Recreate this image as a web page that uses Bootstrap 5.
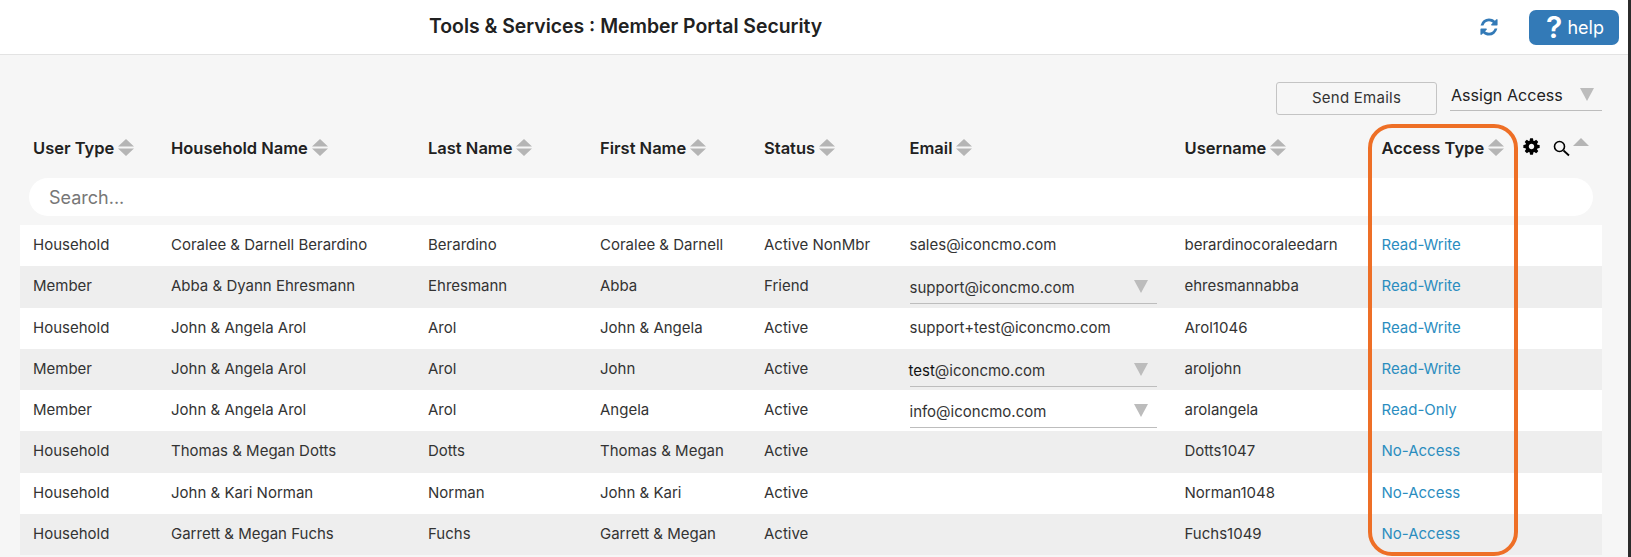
<!DOCTYPE html>
<html lang="en">
<head>
<meta charset="utf-8">
<title>Member Portal Security</title>
<link href="https://cdn.jsdelivr.net/npm/bootstrap@5.3.0/dist/css/bootstrap.min.css" rel="stylesheet">
<style>
html,body{height:557px;overflow:hidden;background:#f6f6f6;font-family:Inter,"Liberation Sans",sans-serif;color:#333}
.app-shell{height:557px}
.page-area{flex:1 1 auto;min-width:0;position:relative;background:#f6f6f6}
.edge-strip{flex:0 0 3px;background:#2b2b2b}
.top-bar{height:55px;background:#fff;border-bottom:1px solid #e3e3e3;padding-left:429px;padding-right:9px}
.page-title{font-size:19.400px;font-weight:600;color:#212121;margin:0;line-height:1}
.refresh-ico{width:20px;height:20px;fill:#337ab7;margin-right:30px}
.help-btn{width:90px;height:35px;background:#337ab7;border:0;border-radius:7px;color:#fff;font-size:18px;padding:0 0 0 2px;display:flex;align-items:center;justify-content:center;gap:5px}
.help-q{font-size:30px;font-weight:600;line-height:1}
.tool-row{height:69px;padding:27px 26px 0 0;justify-content:flex-end;gap:13px}
.send-btn{width:161px;height:33px;background:#f6f6f6;border:1px solid #c4c4c4;border-radius:3px;color:#333;font-size:15px;letter-spacing:.25px;padding:0}
.pick-box{border-bottom:1px solid #bdbdbd;display:flex;justify-content:space-between}
.assign-pick{width:152px;height:29px;font-size:16.100px;color:#212121;padding:1px 8px 0 1px;line-height:24px}
.assign-pick svg{margin-top:5px}
.mail-pick{width:247px;height:33px;color:#333;line-height:22px;padding:6px 9px 0 0;margin-top:2px}
.mail-pick svg{margin-top:3px}
.dark-text{color:#111;margin-left:-1px}
.tbl-wrap{margin-left:20px;width:1582px}
.sec-table{table-layout:fixed;width:1582px;margin:0;border-collapse:collapse;--bs-table-bg:transparent;--bs-table-border-color:transparent}
.sec-table th{background:#f6f6f6;color:#212121;font-size:16.500px;font-weight:600;height:47px;padding:1px 0 0 13px;vertical-align:middle;border:0;white-space:nowrap;box-shadow:none}
.sec-table td{height:41.25px;padding:0 0 .4px 13px;vertical-align:middle;font-size:15px;color:#333;border:0;white-space:nowrap;box-shadow:none}
.sec-table tbody tr:nth-child(odd) td{background:#fff}
.sec-table tbody tr:nth-child(even) td{background:#eee}
.sec-table td.access-cell{color:#2b8dbf}
.sec-table th.search-cell{height:54px;padding:0 9px 2px 9px}
.search-input{width:100%;height:38px;border:0;border-radius:19px;background:#fff;padding:0 20px;font-size:18px;color:#333;outline:0;box-shadow:none}
.search-input::placeholder{color:#777}
.sort-ico{width:16px;height:17px;fill:#b5b5b5;margin-left:4px;vertical-align:-2px}
.tools-cell{display:flex;align-items:flex-start}
.gear-ico{width:19px;height:19px;margin-top:1px}
.find-ico{width:17px;height:17px;margin-left:12px;margin-top:4px}
.up-ico{width:16px;height:8px;fill:#b5b5b5;margin-left:3px;margin-top:2px}
.focus-ring-box{position:absolute;left:1368px;top:124px;width:150px;height:432px;border:4px solid #ee6f26;border-radius:24px;pointer-events:none}
.tools-gap{margin-left:17.500px}
</style>
</head>
<body>
<div class="app-shell d-flex">
<div class="page-area">
  <header class="top-bar d-flex align-items-center">
    <h1 class="page-title">Tools &amp; Services : Member Portal Security</h1>
    <div class="ms-auto d-flex align-items-center">
      <svg class="refresh-ico" viewBox="0 0 1792 1792"><path d="M1639 1056q0 5-1 7-64 268-268 434.5t-478 166.5q-146 0-282.5-55t-243.5-157l-129 129q-19 19-45 19t-45-19-19-45v-448q0-26 19-45t45-19h448q26 0 45 19t19 45-19 45l-137 137q71 66 161 102t187 36q134 0 250-65t186-179q11-17 53-117 8-23 30-23h192q13 0 22.5 9.5t9.5 22.5zm25-800v448q0 26-19 45t-45 19h-448q-26 0-45-19t-19-45 19-45l138-138q-148-137-349-137-134 0-250 65t-186 179q-11 17-53 117-8 23-30 23h-199q-13 0-22.5-9.5t-9.5-22.5v-7q65-268 270-434.5t480-166.5q146 0 284 55.5t245 156.5l130-129q19-19 45-19t45 19 19 45z"/></svg>
      <button type="button" class="btn help-btn"><span class="help-q">?</span><span>help</span></button>
    </div>
  </header>
  <div class="tool-row d-flex align-items-start">
    <button type="button" class="btn send-btn">Send Emails</button>
    <div class="pick-box assign-pick"><span>Assign Access</span><svg width="14" height="13" viewBox="0 0 14 13"><path d="M0 0h14L7 13z" fill="#bcbcbc"/></svg></div>
  </div>
  <div class="tbl-wrap">
    <table class="table sec-table">
      <colgroup><col style="width:138px"><col style="width:257px"><col style="width:172px"><col style="width:164px"><col style="width:145.5px"><col style="width:275px"><col style="width:197px"><col style="width:233.5px"></colgroup>
      <thead>
        <tr>
          <th>User Type<svg class="sort-ico" viewBox="0 0 16 17"><path d="M0 7.500 8 0l8 7.500zM0 9.500h16L8 17z"/></svg></th>
          <th>Household Name<svg class="sort-ico" viewBox="0 0 16 17"><path d="M0 7.500 8 0l8 7.500zM0 9.500h16L8 17z"/></svg></th>
          <th>Last Name<svg class="sort-ico" viewBox="0 0 16 17"><path d="M0 7.500 8 0l8 7.500zM0 9.500h16L8 17z"/></svg></th>
          <th>First Name<svg class="sort-ico" viewBox="0 0 16 17"><path d="M0 7.500 8 0l8 7.500zM0 9.500h16L8 17z"/></svg></th>
          <th>Status<svg class="sort-ico" viewBox="0 0 16 17"><path d="M0 7.500 8 0l8 7.500zM0 9.500h16L8 17z"/></svg></th>
          <th>Email<svg class="sort-ico" viewBox="0 0 16 17"><path d="M0 7.500 8 0l8 7.500zM0 9.500h16L8 17z"/></svg></th>
          <th>Username<svg class="sort-ico" viewBox="0 0 16 17"><path d="M0 7.500 8 0l8 7.500zM0 9.500h16L8 17z"/></svg></th>
          <th>
            <div class="d-flex align-items-start">
              <span>Access Type<svg class="sort-ico" viewBox="0 0 16 17"><path d="M0 7.500 8 0l8 7.500zM0 9.500h16L8 17z"/></svg></span>
              <span class="tools-cell tools-gap">
                <svg class="gear-ico" viewBox="0 0 1792 1792"><path fill="#000" d="M1152 896q0-106-75-181t-181-75-181 75-75 181 75 181 181 75 181-75 75-181zm512-109v222q0 12-8 23t-20 13l-185 28q-19 54-39 91 35 50 107 138 10 12 10 25t-9 23q-27 37-99 108t-94 71q-12 0-26-9l-138-108q-44 23-91 38-16 136-29 186-7 28-36 28h-222q-14 0-24.500-8.500t-11.500-21.500l-28-184q-49-16-90-37l-141 107q-10 9-25 9-14 0-25-11-126-114-165-168-7-10-7-23 0-12 8-23 15-21 51-66.500t54-70.500q-27-50-41-99l-183-27q-13-2-21-12.500t-8-23.500v-222q0-12 8-23t19-13l186-28q14-46 39-92-40-57-107-138-10-12-10-24 0-10 9-23 26-36 98.500-107.500t94.500-71.500q13 0 26 10l138 107q44-23 91-38 16-136 29-186 7-28 36-28h222q14 0 24.500 8.500t11.500 21.500l28 184q49 16 90 37l142-107q9-9 24-9 13 0 25 10 129 119 165 170 7 8 7 22 0 12-8 23-15 21-51 66.500t-54 70.500q26 50 41 98l183 28q13 2 21 12.500t8 23.500z"/></svg>
                <svg class="find-ico" viewBox="0 0 17 17"><circle cx="6.500" cy="6.500" r="5" fill="none" stroke="#000" stroke-width="1.600"/><path d="M10.500 10.500 16 15.500" stroke="#000" stroke-width="1.800" fill="none"/></svg>
                <svg class="up-ico" viewBox="0 0 16 8"><path d="M0 8 8 0l8 8z"/></svg>
              </span>
            </div>
          </th>
        </tr>
        <tr><th colspan="8" class="search-cell"><input type="text" class="form-control search-input" placeholder="Search..."></th></tr>
      </thead>
      <tbody>
        <tr><td>Household</td><td>Coralee &amp; Darnell Berardino</td><td>Berardino</td><td>Coralee &amp; Darnell</td><td>Active NonMbr</td><td>sales@iconcmo.com</td><td>berardinocoraleedarn</td><td class="access-cell">Read-Write</td></tr>
        <tr><td>Member</td><td>Abba &amp; Dyann Ehresmann</td><td>Ehresmann</td><td>Abba</td><td>Friend</td><td><div class="pick-box mail-pick"><span>support@iconcmo.com</span><svg width="14" height="13" viewBox="0 0 14 13"><path d="M0 0h14L7 13z" fill="#bcbcbc"/></svg></div></td><td>ehresmannabba</td><td class="access-cell">Read-Write</td></tr>
        <tr><td>Household</td><td>John &amp; Angela Arol</td><td>Arol</td><td>John &amp; Angela</td><td>Active</td><td>support+test@iconcmo.com</td><td>Arol1046</td><td class="access-cell">Read-Write</td></tr>
        <tr><td>Member</td><td>John &amp; Angela Arol</td><td>Arol</td><td>John</td><td>Active</td><td><div class="pick-box mail-pick"><span><span class="dark-text">test</span>@iconcmo.com</span><svg width="14" height="13" viewBox="0 0 14 13"><path d="M0 0h14L7 13z" fill="#bcbcbc"/></svg></div></td><td>aroljohn</td><td class="access-cell">Read-Write</td></tr>
        <tr><td>Member</td><td>John &amp; Angela Arol</td><td>Arol</td><td>Angela</td><td>Active</td><td><div class="pick-box mail-pick"><span>info@iconcmo.com</span><svg width="14" height="13" viewBox="0 0 14 13"><path d="M0 0h14L7 13z" fill="#bcbcbc"/></svg></div></td><td>arolangela</td><td class="access-cell">Read-Only</td></tr>
        <tr><td>Household</td><td>Thomas &amp; Megan Dotts</td><td>Dotts</td><td>Thomas &amp; Megan</td><td>Active</td><td></td><td>Dotts1047</td><td class="access-cell">No-Access</td></tr>
        <tr><td>Household</td><td>John &amp; Kari Norman</td><td>Norman</td><td>John &amp; Kari</td><td>Active</td><td></td><td>Norman1048</td><td class="access-cell">No-Access</td></tr>
        <tr><td>Household</td><td>Garrett &amp; Megan Fuchs</td><td>Fuchs</td><td>Garrett &amp; Megan</td><td>Active</td><td></td><td>Fuchs1049</td><td class="access-cell">No-Access</td></tr>
      </tbody>
    </table>
  </div>
  <div class="focus-ring-box"></div>
</div>
<div class="edge-strip"></div>
</div>
<script src="https://cdn.jsdelivr.net/npm/bootstrap@5.3.0/dist/js/bootstrap.bundle.min.js"></script>
</body>
</html>
